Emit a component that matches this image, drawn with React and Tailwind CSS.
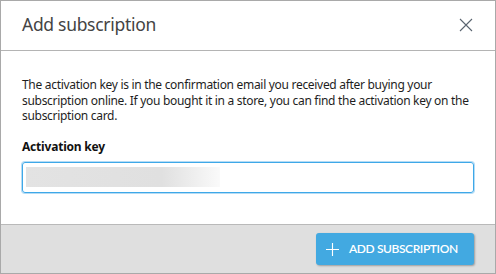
import React from 'react';

export default function App() {
    return (
        <div className="w-[496px] h-[274px] bg-white border border-[#a9a9a9] flex flex-col font-['Noto_Sans',sans-serif]">
            <div className="h-[50px] flex items-center justify-between pl-[21px] pr-[22px] border-b border-[#b4b4b4]">
                <h1 className="text-[17.5px] text-[#444] leading-none font-normal tracking-[-0.3px] -mt-[2px]">Add subscription</h1>
                <svg width="14" height="14" viewBox="0 0 14 14" className="-mt-[2px]">
                    <path d="M1 1L13 13M13 1L1 13" stroke="#5a6470" strokeWidth="1.1" />
                </svg>
            </div>

            <div className="flex-1 px-[21px] pt-[26px]">
                <p className="text-[12px] leading-[15.5px] text-[#1e1e1e] tracking-[-0.3px]">
                    The activation key is in the confirmation email you received after buying your subscription online. If you bought it in a store, you can find the activation key on the subscription card.
                </p>
                <label className="block mt-[15px] text-[12px] font-bold text-[#111] leading-[15px] tracking-[-0.2px]">Activation key</label>
                <div className="mt-[8px] h-[31px] rounded-[3px] border border-[#3ea8e8] ring-1 ring-[#b5dcf5] flex items-center px-[3px]">
                    <div className="h-[20px] w-[194px] bg-gradient-to-r from-[#e3e3e3] via-[#e0e0e0] via-70% to-[#fafafa]" />
                </div>
            </div>

            <div className="h-[49px] bg-[#dfdfdf] border-t border-[#b9b9b9] flex items-center justify-end pr-[21px]">
                <button className="h-[32px] w-[158px] rounded-[3px] bg-[#42a9e1] shadow-[1px_1px_2px_rgba(0,0,0,0.3)] flex items-center pl-[10px] gap-[10px] text-white font-['Lato',sans-serif] font-semibold text-[12px] tracking-[-0.4px]">
                    <svg width="13" height="13" viewBox="0 0 14 14">
                        <path d="M7 0V14M0 7H14" stroke="#fff" strokeWidth="1.2" />
                    </svg>
                    ADD SUBSCRIPTION
                </button>
            </div>
        </div>
    );
}
